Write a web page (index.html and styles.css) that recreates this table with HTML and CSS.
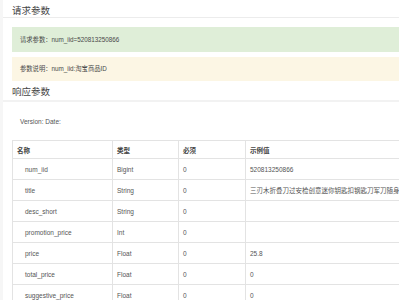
FILE: index.html
```html
<!DOCTYPE html>
<html lang="zh">
<head>
<meta charset="utf-8">
<link rel="stylesheet" href="styles.css">
</head>
<body>
<div class="page">
  <h2 class="title">请求参数</h2>
  <div class="alert alert-success">请求参数：num_iid=520813250866</div>
  <div class="alert alert-warning">参数说明：num_iid:淘宝商品ID</div>
  <h2 class="title title-2">响应参数</h2>
  <div class="version">Version: Date:</div>
  <table class="params">
    <thead>
      <tr><th class="c-name">名称</th><th class="c-type">类型</th><th class="c-req">必须</th><th class="c-ex">示例值</th></tr>
    </thead>
    <tbody>
      <tr><td class="name">num_iid</td><td>Bigint</td><td>0</td><td>520813250866</td></tr>
      <tr><td class="name">title</td><td>String</td><td>0</td><td>三刃木折叠刀过安检创意迷你钥匙扣钢匙刀军刀随身多功能小刀</td></tr>
      <tr><td class="name">desc_short</td><td>String</td><td>0</td><td></td></tr>
      <tr><td class="name">promotion_price</td><td>Int</td><td>0</td><td></td></tr>
      <tr><td class="name">price</td><td>Float</td><td>0</td><td>25.8</td></tr>
      <tr><td class="name">total_price</td><td>Float</td><td>0</td><td>0</td></tr>
      <tr><td class="name">suggestive_price</td><td>Float</td><td>0</td><td>0</td></tr>
    </tbody>
  </table>
</div>
</body>
</html>
```

FILE: styles.css
```css
html, body {
  margin: 0;
  padding: 0;
  background: #ffffff;
  overflow: hidden;
}
body {
  font-family: "Liberation Sans", "Noto Sans CJK SC", sans-serif;
  color: #555;
}
.page {
  width: 640px;
  border-left: 3px solid #f6f6f6;
}
.title {
  margin: 0;
  height: 17px;
  padding-left: 9px;
  font-size: 9.5px;
  line-height: 21px;
  font-weight: normal;
  color: #444;
  border-bottom: 1px solid #ececec;
}
.alert {
  margin-left: 9px;
  padding-left: 8px;
  font-size: 6.3px;
  color: #4a4a4a;
}
.alert-success {
  margin-top: 9px;
  height: 25px;
  line-height: 25px;
  background: #dfeed8;
}
.alert-warning {
  margin-top: 5px;
  height: 24px;
  line-height: 24px;
  background: #fcf6e4;
}
.title-2 {
  height: 19px;
  line-height: 22px;
  border-bottom: 2px solid #f2f2f2;
}
.version {
  height: 38px;
  line-height: 40px;
  padding-left: 17px;
  font-size: 6.5px;
  color: #555;
}
.params {
  margin-left: 9px;
  border-collapse: collapse;
  width: 620px;
  font-size: 6.5px;
  color: #555;
}
.params th, .params td {
  border: 1px solid #e3e3e3;
  text-align: left;
  vertical-align: middle;
  padding: 0 0 0 4px;
  white-space: nowrap;
}
.params th {
  height: 17px;
  font-weight: bold;
  color: #444;
}
.params td {
  height: 20px;
}
.params td.name {
  padding-left: 12px;
}
.c-name { width: 95px; }
.c-type { width: 61px; }
.c-req { width: 62px; }
```
